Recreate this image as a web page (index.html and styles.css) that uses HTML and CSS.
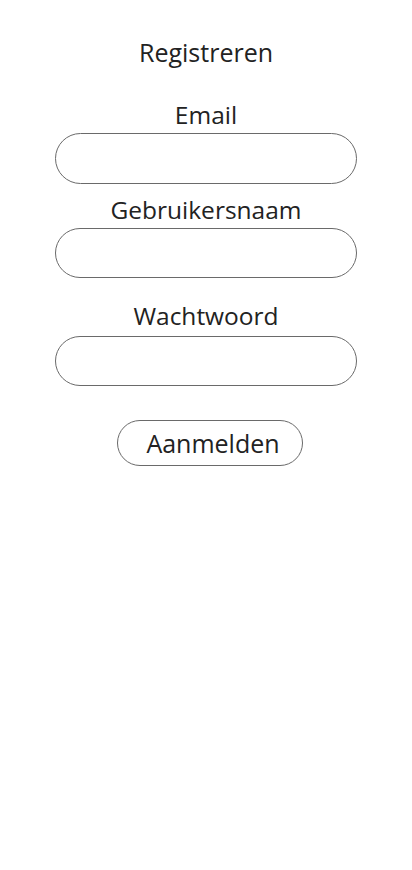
FILE: index.html
```html
<!DOCTYPE html>
<html lang="nl">
<head>
<meta charset="utf-8">
<title>Registreren</title>
<link rel="stylesheet" href="styles.css">
</head>
<body>
<main class="page">
  <h1 class="title">Registreren</h1>
  <form class="form">
    <label class="field field-email">
      <span class="label">Email</span>
      <input class="input" type="email">
    </label>
    <label class="field field-user">
      <span class="label">Gebruikersnaam</span>
      <input class="input" type="text">
    </label>
    <label class="field field-pass">
      <span class="label">Wachtwoord</span>
      <input class="input" type="password">
    </label>
    <button class="button" type="button">Aanmelden</button>
  </form>
</main>
</body>
</html>
```
FILE: styles.css
```css
* { box-sizing: border-box; }
html, body { margin: 0; padding: 0; background: #fff; }
body {
  font-family: "Open Sans", "Noto Sans", sans-serif;
  color: #222;
  width: 412px;
  height: 870px;
}
.page {
  display: flex;
  flex-direction: column;
  align-items: center;
  padding-top: 35px;
}
.title {
  margin: 0;
  font-size: 25px;
  font-weight: 400;
  line-height: 34px;
}
.form {
  display: flex;
  flex-direction: column;
  align-items: center;
  width: 302px;
}
.field {
  display: flex;
  flex-direction: column;
  align-items: center;
  width: 100%;
}
.label {
  font-size: 24.5px;
  line-height: 32px;
  margin-bottom: 2px;
}
.field-email { margin-top: 30px; }
.field-user { margin-top: 10px; }
.field-pass { margin-top: 22px; }
.field-pass .label { margin-bottom: 4px; }
.input {
  width: 302px;
  height: 51px;
  border: 1px solid #6a6a6a;
  border-radius: 26px;
  background: #fff;
  outline: none;
  margin: 0;
}
.field-user .input, .field-pass .input { height: 50px; }
.button {
  margin-top: 34px;
  margin-left: 8px;
  width: 186px;
  height: 46px;
  border: 1px solid #6a6a6a;
  border-radius: 23px;
  background: #fff;
  font-family: inherit;
  font-size: 25px;
  color: #222;
  padding: 0 0 0 6px;
  line-height: 1;
}
```
